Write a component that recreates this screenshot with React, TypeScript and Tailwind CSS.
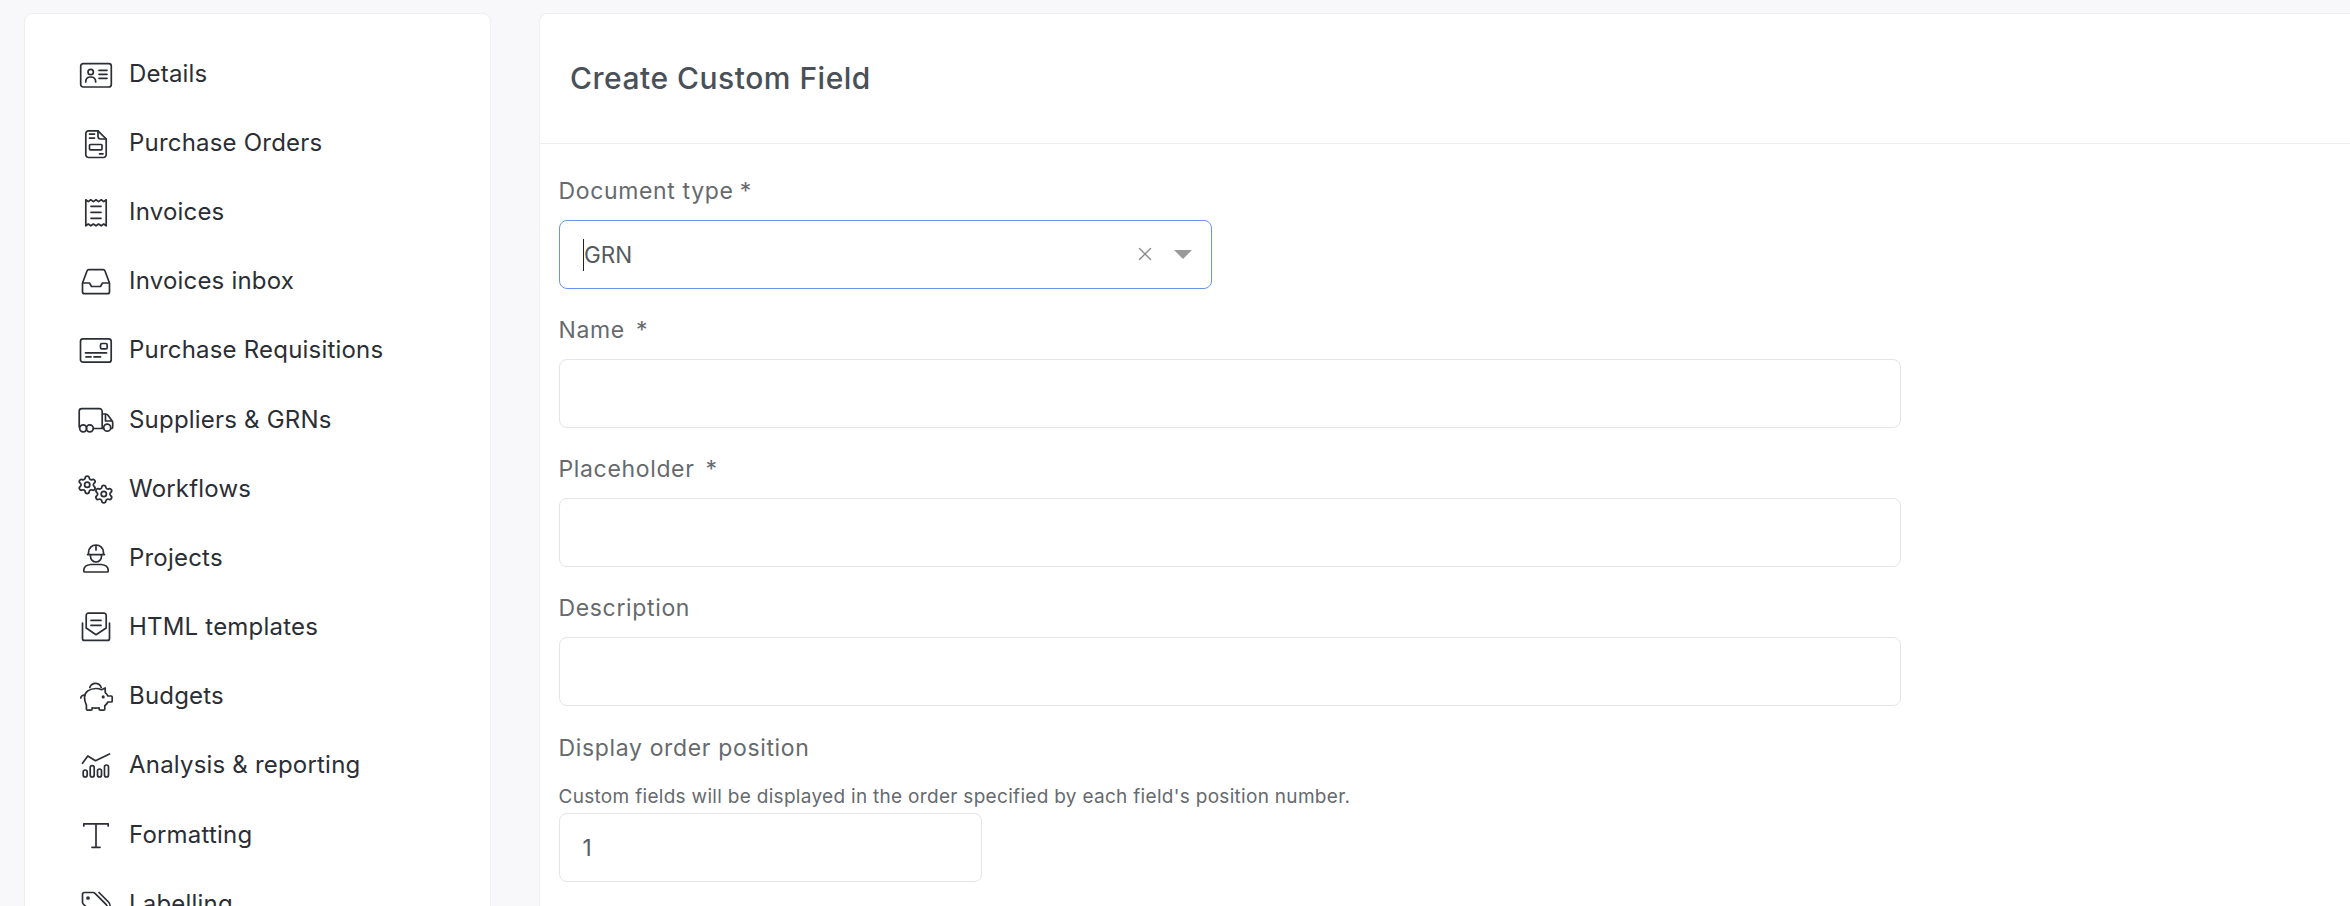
import { Settings, X } from "lucide-react";
import type { ReactNode } from "react";

function Glyph({ children }: { children: ReactNode }) {
  return (
    <svg
      viewBox="0 0 36 36"
      fill="none"
      stroke="currentColor"
      strokeWidth={1.700}
      strokeLinecap="round"
      strokeLinejoin="round"
      className="h-9 w-9 shrink-0 text-[#2b2e35]"
    >
      {children}
    </svg>
  );
}

const navItems: { label: string; icon: ReactNode }[] = [
  {
    label: "Details",
    icon: (
      <>
        <rect x="2.7" y="7.7" width="30.6" height="23.3" rx="2.5" />
        <circle cx="12.7" cy="16" r="2.7" />
        <path d="M7.7 26c0-3.5 2.2-5 5-5s5 1.500 5 5M21 14.300h8M21 18.300h8M21 22.300h8" />
      </>
    ),
  },
  {
    label: "Purchase Orders",
    icon: (
      <>
        <path d="M10.500 5.800h9.500l8.200 8.200v15.800a2.700 2.700 0 0 1-2.700 2.700H10.500a2.700 2.700 0 0 1-2.700-2.700V8.500a2.700 2.700 0 0 1 2.700-2.700z" />
        <path d="M20 5.800v5.500a2.700 2.700 0 0 0 2.700 2.700h5.500M11.500 9.100h5M11.500 13.100h5M21.500 28.800h3.500" />
        <rect x="11.500" y="19.500" width="12.500" height="5.300" rx="0.800" />
      </>
    ),
  },
  {
    label: "Invoices",
    icon: (
      <>
        <path d="M7.800 5.800l2.500 1.800 2.500-1.800 2.600 1.800 2.600-1.800 2.600 1.800 2.600-1.800 2.500 1.800 2.500-1.800v26l-2.500-1.800-2.500 1.800-2.600-1.800-2.600 1.800-2.600-1.800-2.600 1.800-2.500-1.800-2.500 1.800z" />
        <path d="M13 12.300h10M13 18.300h10M13 24.300h10" />
      </>
    ),
  },
  {
    label: "Invoices inbox",
    icon: (
      <path d="M4.500 20L9 8a2 2 0 0 1 1.800-1.300h14.400A2 2 0 0 1 27 8l4.500 12v8.700a2 2 0 0 1-2 2h-23a2 2 0 0 1-2-2zM4.500 20h7l2 3.500h9l2-3.500h7" />
    ),
  },
  {
    label: "Purchase Requisitions",
    icon: (
      <>
        <rect x="2.500" y="6.900" width="30.700" height="23.300" rx="2.500" />
        <rect x="22.500" y="11.500" width="6.700" height="5.400" rx="1.500" />
        <path d="M7.500 20.900h21M8 24.900h5M16 24.900h6.500" />
      </>
    ),
  },
  {
    label: "Suppliers & GRNs",
    icon: (
      <>
        <path d="M1.200 25V9.200a2.500 2.500 0 0 1 2.500-2.500h17.800a2.700 2.700 0 0 1 2.700 2.700v17M15.300 26.500h10.400M24.200 12h3.500c1 0 1.700.4 2.300 1.200l4 5.500c.5.7.7 1.200.7 2V25a1.500 1.500 0 0 1-1.500 1.500M27.500 12.500v6.500h7" />
        <circle cx="5.200" cy="26.300" r="3.500" />
        <circle cx="11.800" cy="26.300" r="3.500" />
        <circle cx="29.200" cy="25.700" r="3.500" />
      </>
    ),
  },
  {
    label: "Workflows",
    icon: (
      <>
        <Settings x={-1.300} y={3.300} width={21} height={21} strokeWidth={2} />
        <Settings x={15.300} y={12.600} width={21} height={21} strokeWidth={2} />
      </>
    ),
  },
  {
    label: "Projects",
    icon: (
      <>
        <path d="M10.500 14.600v-2.100a7.500 7.500 0 0 1 15 0v2.100M9.500 14.600h17M18 5v5M12.500 15v1.500a5.500 5.500 0 0 0 11 0V15" />
        <path d="M5.800 31v-1c0-3 3-5 7-5.500h10.400c4 .5 7 2.500 7 5.500v1a1 1 0 0 1-1 1H6.800a1 1 0 0 1-1-1z" />
      </>
    ),
  },
  {
    label: "HTML templates",
    icon: (
      <>
        <path d="M4.500 14v15.400a2 2 0 0 0 2 2h23a2 2 0 0 0 2-2V14" />
        <path d="M10.500 4.100h15.400a2.300 2.300 0 0 1 2.300 2.300V19L18 25.700 8.200 19V6.400a2.300 2.300 0 0 1 2.300-2.300z" />
        <path d="M13 11.400h10M13 16.400h10" />
      </>
    ),
  },
  {
    label: "Budgets",
    icon: (
      <>
        <path d="M11.800 9.500a6 6 0 0 1 11.400 0M6.500 17C4.500 17 2.800 18.300 2.800 20" />
        <path d="M6.500 19.500C6.500 14 11.500 10.500 18 10.500c2.200 0 4 .4 5.600 1.200l3.600-1.700v4.600c1.300 1 2.200 2.200 2.700 3.400h3.300a1 1 0 0 1 1 1v4a1 1 0 0 1-1 1h-3.200c-.8 1.500-1.900 2.700-3.200 3.600v3.400a1.200 1.200 0 0 1-1.200 1.200h-3.300a1.200 1.200 0 0 1-1.200-1.200v-1.200c-1.200.3-2.400.4-3.600.4s-2.300-.1-3.400-.4v1.200a1.200 1.200 0 0 1-1.200 1.200H9.600a1.200 1.200 0 0 1-1.200-1.200v-3.800C7.200 24.700 6.500 22.300 6.500 19.500z" />
        <circle cx="25.200" cy="18.900" r="0.700" fill="currentColor" />
      </>
    ),
  },
  {
    label: "Analysis & reporting",
    icon: (
      <>
        <path d="M4.500 16.300L9.800 9l7.700 4.700L31.500 7" />
        <rect x="5.200" y="23" width="4" height="7" rx="2" />
        <rect x="12.200" y="18.700" width="4" height="11.300" rx="2" />
        <rect x="19.500" y="22" width="4" height="8" rx="2" />
        <rect x="26.500" y="18" width="4" height="12" rx="2" />
      </>
    ),
  },
  {
    label: "Formatting",
    icon: <path d="M5.800 9V6.800h24.400V9M18 6.800v23.500M14 30.300h8" />,
  },
  {
    label: "Labelling",
    icon: (
      <>
        <path d="M4.500 8.500a2 2 0 0 1 2-2h8.500a3 3 0 0 1 2 .8l11 11a3 3 0 0 1 0 4.200l-7 7a3 3 0 0 1-4.200 0l-11.500-11.500a2.500 2.500 0 0 1-.8-1.800z" />
        <path d="M21 6.500l9.500 9.500a5 5 0 0 1 0 7l-6 6" />
        <circle cx="10" cy="12" r="1" />
      </>
    ),
  },
];

function Label({ children }: { children: ReactNode }) {
  return <label className="mb-[14px] block h-[30px] text-[23px] leading-[30px] tracking-[0.650px] text-[#666a6e]">{children}</label>;
}

function Required() {
  return <span className="ml-[11px]">*</span>;
}

function TextField({ label, required }: { label: string; required?: boolean }) {
  return (
    <div className="mb-[26px]">
      <Label>
        {label}
        {required && <Required />}
      </Label>
      <input
        type="text"
        className="block h-[69px] w-[1342px] rounded-lg border-[1.500px] border-[#e4e4ea] bg-white px-[26px] text-[22.500px] outline-none"
      />
    </div>
  );
}

export default function App() {
  return (
    <div className="flex h-[906px] items-start gap-[48px] overflow-hidden bg-[#f8f8fb] pt-[13px] pl-[24px] font-['Inter',sans-serif]">
      <aside className="h-[960px] w-[467px] shrink-0 rounded-lg border border-[#eeeef3] bg-white pt-[25px] pl-[53px]">
        <nav className="flex flex-col">
          {navItems.map((item) => (
            <a key={item.label} className="flex h-[69.200px] items-center gap-[15px] text-[24px] tracking-[0.200px] text-[#2b2e35]">
              <Glyph>{item.icon}</Glyph>
              <span>{item.label}</span>
            </a>
          ))}
        </nav>
      </aside>

      <main className="h-[960px] min-w-0 flex-1 rounded-tl-lg border-t border-l border-[#eeeef3] bg-white">
        <header className="flex h-[130px] items-center border-b border-[#eeeef2] pl-[30px]">
          <h1 className="text-[30px] font-medium tracking-[0.500px] text-[#4a5058]">Create Custom Field</h1>
        </header>

        <form className="pt-[32px] pl-[18.500px]">
          <div className="mb-[26px]">
            <Label>
              Document type<span className="ml-[6px]">*</span>
            </Label>
            <div className="relative flex h-[69px] w-[653px] items-center rounded-lg border-[1.500px] border-[#6b93ea] pl-[23px] text-[22.500px] text-[#555a60]">
              <span className="h-[32px] w-[1.500px] bg-[#222]" />
              <span>GRN</span>
              <X className="absolute top-[22px] right-[55px] h-[22px] w-[22px] text-[#8a8a8a]" strokeWidth={1.500} />
              <span className="absolute top-[29px] right-[19px] h-0 w-0 border-x-[9px] border-t-[9px] border-x-transparent border-t-[#999]" />
            </div>
          </div>

          <TextField label="Name" required />
          <TextField label="Placeholder" required />
          <TextField label="Description" />

          <div className="pt-[1px]">
            <Label>Display order position</Label>
          </div>
          <p className="mt-[-15px] pt-[21px] pb-[2px] text-[19px] leading-[28px] tracking-[0.300px] text-[#666a6e]">
            Custom fields will be displayed in the order specified by each field's position number.
          </p>
          <input
            type="text"
            defaultValue="1"
            className="block h-[69px] w-[423px] rounded-lg border-[1.500px] border-[#e4e4ea] px-[23px] text-[22.500px] text-[#555a60] outline-none"
          />
        </form>
      </main>
    </div>
  );
}
